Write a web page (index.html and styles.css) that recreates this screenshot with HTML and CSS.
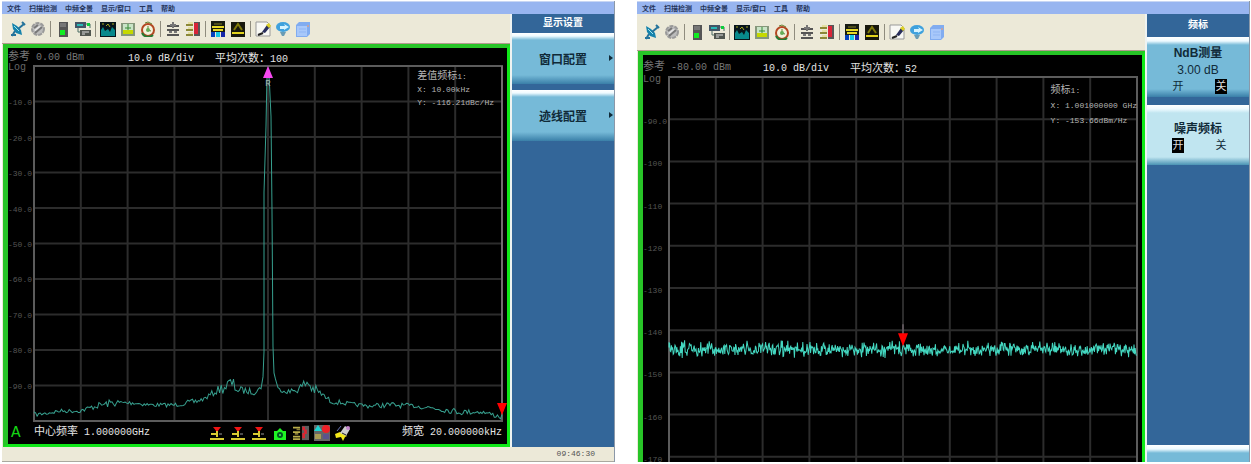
FILE: index.html
```html
<!DOCTYPE html>
<html lang="zh">
<head>
<meta charset="utf-8">
<meta name="viewport" content="width=device-width, initial-scale=1">
<title>频谱分析仪</title>
<link rel="stylesheet" href="styles.css">
</head>
<body>

<!-- 图标 -->
<svg class="defs" aria-hidden="true">
  <symbol id="dish" viewBox="0 0 16 16">
    <path d="M2 2l5 3 4 4 1 5-6-2-3-4z" fill="#1683ac"/>
    <path d="M8 8l6-5M12 1l3 3M5 10l-3 5M1 14h5" stroke="#25739b" stroke-width="2" fill="none"/>
    <path d="M4 5l5 5" stroke="#9de4ef"/>
  </symbol>
  <symbol id="gear" viewBox="0 0 16 16">
    <circle cx="8" cy="8" r="6" fill="#bbb" stroke="#9a9a9a" stroke-width="2" stroke-dasharray="4 1"/>
    <path d="M4 9l5-4 3 1-5 5z" fill="#e4e4e4"/><path d="M5 12l7-6M4 7l4-3" stroke="#777" stroke-width="2"/>
  </symbol>
  <symbol id="power" viewBox="0 0 16 16">
    <rect x="4" y="1" width="9" height="15" fill="#555"/><path d="M5 3h6M5 5h6" stroke="#999"/>
    <rect x="5" y="9" width="5" height="5" fill="#11ed22"/>
  </symbol>
  <symbol id="device" viewBox="0 0 16 16">
    <rect x="0" y="1" width="11" height="6" fill="#456"/><rect x="2" y="3" width="6" height="2" fill="#28b8b6"/>
    <path d="M11 3h4v4M3 7v4h3" stroke="#4a6d65" fill="none"/><rect x="12" y="2" width="3" height="3" fill="#0bce3b"/>
    <rect x="5" y="9" width="11" height="6" fill="#505650"/><path d="M7 11h7M7 13h3" stroke="#ddd"/>
  </symbol>
  <symbol id="spectrum" viewBox="0 0 16 16">
    <rect y="1" width="16" height="15" fill="#07141a"/><path d="M1 15V9l2-3 2 4 3-2 2 3 2-5 3 3v6z" fill="#08898c"/>
    <path d="M2 3h2M6 5l2-2 2 3M12 3h2" stroke="#aaa820" fill="none"/>
  </symbol>
  <symbol id="limit" viewBox="0 0 16 16">
    <rect x="1" y="2" width="14" height="13" fill="#85977b"/><rect x="3" y="3" width="10" height="9" fill="#c9e4c7"/>
    <path d="M3 10h10M3 12h10" stroke="#c5d900" stroke-width="2"/><path d="M8 3v6M5 7h6" stroke="#368b34"/>
  </symbol>
  <symbol id="clock" viewBox="0 0 16 16">
    <circle cx="8" cy="9" r="6" fill="#f2f2dc" stroke="#b44722" stroke-width="2"/>
    <path d="M2 12a7 7 0 0 0 11 2" stroke="#267a32" stroke-width="2" fill="none"/>
    <path d="M5 2l3-1 4 2M8 9V5M8 9l3 1" stroke="#668331" fill="none"/><circle cx="8" cy="9" r="2" fill="#65ad58"/>
  </symbol>
  <symbol id="level" viewBox="0 0 16 16">
    <path d="M2 5h12M2 9h12M2 14h12" stroke="#555" stroke-width="2"/><path d="M8 1v6M5 4h6M4 11h3M9 11h3" stroke="#777" stroke-width="2"/>
  </symbol>
  <symbol id="list" viewBox="0 0 16 16">
    <path d="M1 4h7M1 9h7M1 14h7" stroke="#8b8836" stroke-width="2"/><path d="M3 2h5M3 7h5M3 12h5" stroke="#ddd66c"/>
    <rect x="9" y="1" width="6" height="14" fill="#595757"/><rect x="9" y="2" width="4" height="11" fill="#d92538"/>
  </symbol>
  <symbol id="span" viewBox="0 0 16 16">
    <rect x="1" y="0" width="14" height="11" fill="#171b12"/><path d="M2 6h12M3 9h10" stroke="#e6d927" stroke-width="2"/>
    <path d="M4 3h8" stroke="#817e22"/><path d="M1 11h4v5H1z" fill="#0640bd"/><path d="M6 11h4v5H6z" fill="#15c9e6"/><path d="M11 11h4v5h-4z" fill="#1526aa"/>
  </symbol>
  <symbol id="peak" viewBox="0 0 16 16">
    <rect x="1" y="1" width="14" height="15" fill="#17170c"/><path d="M4 9l4-6 4 6" stroke="#7f790a" stroke-width="2" fill="none"/>
    <path d="M2 12h12" stroke="#e2d31d" stroke-width="2"/>
  </symbol>
  <symbol id="edit" viewBox="0 0 16 16">
    <path d="M1 1h11l3 3v11H1z" fill="#f8f8f4" stroke="#999"/><path d="M3 14l5-2" stroke="#222" stroke-width="2"/>
    <path d="M7 11l5-7 3 2-5 6z" fill="#292e5c"/><path d="M11 4l3-2 2 3-2 2z" fill="#ddd127"/>
  </symbol>
  <symbol id="help" viewBox="0 0 16 16">
    <ellipse cx="8" cy="6" rx="7" ry="5" fill="#3fa1dd"/><path d="M5 5h5l-1-2 5 3-5 3V8H5z" fill="#d6f3ff"/>
    <path d="M5 11h6l-2 4H7z" fill="#6a9cb4"/>
  </symbol>
  <symbol id="book" viewBox="0 0 16 16">
    <path d="M1 4l3-3h11v12l-3 3H1z" fill="#81acf0"/><path d="M2 5h10v10H2z" fill="#a8c8fa"/>
    <path d="M4 8h7M4 11h7" stroke="#8fb5f4"/><circle cx="13" cy="5" r="1" fill="#d7a18c"/>
  </symbol>
  <symbol id="marker" viewBox="0 0 16 16">
    <path d="M4 2h8l-4 5z" fill="#f01414"/><path d="M8 6v6M2 9h5M1 14h14" stroke="#d9cc31" stroke-width="2"/><path d="M10 9h3" stroke="#999"/>
  </symbol>
  <symbol id="home" viewBox="0 0 16 16">
    <path d="M2 6h3l3-3 3 3h3v9H2z" fill="#1ef323"/><circle cx="8" cy="10" r="3" fill="#052"/><circle cx="8" cy="10" r="1" fill="#4f5"/>
  </symbol>
  <symbol id="table" viewBox="0 0 18 16">
    <path d="M0 2h8M0 7h8M0 12h8M0 15h8" stroke="#b9ad49" stroke-width="2"/><path d="M4 4h4M2 9h4" stroke="#877b37" stroke-width="2"/>
    <rect x="10" width="8" height="16" fill="#5d5d5d"/><path d="M12 1v4M14 4v5M12 8v6" stroke="#d92632" stroke-width="3"/>
  </symbol>
  <symbol id="blocks" viewBox="0 0 16 16">
    <rect width="16" height="16" fill="#666"/><path d="M0 6l4-6 4 6z" fill="#1dd6d4"/><circle cx="12" cy="4" r="4" fill="#ed2128"/>
    <rect x="1" y="9" width="6" height="5" fill="#a99c55"/><rect x="9" y="9" width="6" height="5" fill="#5b548d"/>
  </symbol>
  <symbol id="brush" viewBox="0 0 16 16">
    <path d="M0 9l5-2 7 4-2 1-2 4-2-4-5 1z" fill="#f2e71a"/><path d="M5 8l5-7 5 3-4 7z" fill="#ccc"/>
    <path d="M2 6l4-5" stroke="#6873b6"/><circle cx="13" cy="3" r="2" fill="#c487cd"/><path d="M7 8l4 2" stroke="#222"/>
  </symbol>
</svg>

<main class="bench">

  <section class="analyzer first">
    <nav class="menu">
      <button>文件</button><button>扫描检测</button><button>中频全景</button><button>显示/窗口</button><button>工具</button><button>帮助</button>
    </nav>
    <div class="work">
      <div class="tools"></div>
      <div class="screen">
        <div class="info">
          <span class="ref"><b>参考</b> 0.00 dBm</span>
          <span class="scale">10.0 dB/div</span>
          <span><b>平均次数：</b>100</span>
        </div>
        <div class="graph">
          <div class="axis">
            <span class="log">Log</span><span>-10.0</span><span>-20.0</span><span>-30.0</span><span>-40.0</span><span>-50.0</span><span>-60.0</span><span>-70.0</span><span>-80.0</span><span>-90.0</span>
          </div>
          <div class="plot">
            <svg id="carrier" viewBox="0 0 468 354" preserveAspectRatio="none">
              <g class="grid"></g>
              <path class="trace"/>
              <path d="M234 0l5 12h-10z" fill="#f548ef"/>
              <text class="tag" x="234" y="20">R</text>
              <path class="stem" d="M468 0v340"/>
              <path d="M463 336h10l-5 12z" fill="#f00"/>
            </svg>
            <p class="readout"><b>差值频标</b>1:<br>X: 10.00kHz<br>Y: -116.21dBc/Hz</p>
          </div>
        </div>
        <div class="foot">
          <span class="channel">A</span>
          <span><b>中心频率</b> 1.000000GHz</span>
          <div class="marks">
            <button aria-label="频标1"><svg><use href="#marker"/></svg></button>
            <button aria-label="频标2"><svg><use href="#marker"/></svg></button>
            <button aria-label="频标3"><svg><use href="#marker"/></svg></button>
            <button aria-label="复位"><svg><use href="#home"/></svg></button>
            <button aria-label="列表"><svg><use href="#table"/></svg></button>
            <button aria-label="窗口"><svg><use href="#blocks"/></svg></button>
            <button aria-label="清除"><svg><use href="#brush"/></svg></button>
          </div>
          <span class="width"><b>频宽</b> 20.000000kHz</span>
        </div>
      </div>
    </div>
    <aside class="side">
      <h2>显示设置</h2>
      <button class="key more">窗口配置</button>
      <button class="key more">迹线配置</button>
    </aside>
    <footer class="status"><time>09:46:30</time></footer>
  </section>

  <section class="analyzer second">
    <nav class="menu">
      <button>文件</button><button>扫描检测</button><button>中频全景</button><button>显示/窗口</button><button>工具</button><button>帮助</button>
    </nav>
    <div class="work">
      <div class="tools"></div>
      <div class="screen">
        <div class="info">
          <span class="ref"><b>参考</b> -80.00 dBm</span>
          <span class="scale">10.0 dB/div</span>
          <span><b>平均次数：</b>52</span>
        </div>
        <div class="graph">
          <div class="axis">
            <span class="log">Log</span><span>-90.0</span><span>-100</span><span>-110</span><span>-120</span><span>-130</span><span>-140</span><span>-150</span><span>-160</span><span>-170</span>
          </div>
          <div class="plot">
            <svg id="noise" viewBox="0 0 468 420" preserveAspectRatio="none">
              <g class="grid"></g>
              <path class="trace"/>
              <path class="stem" d="M234 246v10"/>
              <path d="M229 255h10l-5 13z" fill="#f00"/>
            </svg>
            <p class="readout"><b>频标</b>1:<br>X: 1.001000000 GHz<br>Y: -153.66dBm/Hz</p>
          </div>
        </div>
      </div>
    </div>
    <aside class="side">
      <h2>频标</h2>
      <button class="key">NdB测量<span class="value">3.00 dB</span><span class="switch"><i>开</i><i class="on">关</i></span></button>
      <button class="key active">噪声频标<span class="switch"><i class="on">开</i><i>关</i></span></button>
      <button class="key last" aria-label="返回"></button>
    </aside>
  </section>

</main>

<script src="script.js"></script>
</body>
</html>
```
FILE: styles.css
```css
* {
  box-sizing: border-box;
}
body {
  margin: 0;
  background: #fff;
  font-family: "Liberation Sans", "Noto Sans CJK SC", sans-serif;
}
button {
  margin: 0;
  padding: 0;
  border: 0;
  background: none;
  font: inherit;
  color: inherit;
}
.defs {
  position: absolute;
  width: 0;
  height: 0;
}
.bench {
  display: grid;
  grid-template-columns: 1fr 1fr;
  gap: 22px;
  height: 100vh;
  min-height: 360px;
  padding: 1px 1px 2px 2px;
}
.analyzer {
  display: grid;
  grid-template-columns: 1fr 104px;
  grid-template-rows: 13px minmax(0, 1fr) auto;
  min-height: 0;
  overflow: hidden;
  background: #ece9d8;
  border-right: 1px solid #8b98a8;
}

/* 菜单 */
.menu {
  grid-column: 1 / 3;
  display: flex;
  gap: 8px;
  padding-left: 5px;
  background: #98b5f0;
  border-top: 1px solid #c8d6f4;
  font-size: 7px;
  font-weight: bold;
  line-height: 11px;
  color: #26355c;
}

/* 工具栏 */
.work {
  display: flex;
  flex-direction: column;
  min-width: 0;
  min-height: 0;
}
.tools {
  flex: none;
  display: flex;
  align-items: center;
  gap: 4px;
  height: 30px;
  padding-left: 8px;
  border-bottom: 1px solid #b39a90;
}
.tools svg, .marks svg {
  display: block;
  width: 16px;
  height: 16px;
}
.tools hr {
  width: 1px;
  height: 16px;
  margin: 0;
  border: 0;
  background: #8f8c7e;
}
.second .tools {
  height: 37px;
  padding-left: 7px;
}

/* 屏幕 */
.screen {
  flex: 1;
  display: flex;
  flex-direction: column;
  min-height: 0;
  margin-left: 1px;
  padding-right: 5px;
  overflow: hidden;
  background: #000;
  border: 4px solid #27c427;
  border-width: 4px 3px 3px 5px;
  border-right-color: #10e818;
  border-bottom-color: #10e818;
  font: 10px/14px "Liberation Mono", "Noto Sans CJK SC", monospace;
  color: #e4e4e4;
  white-space: nowrap;
}
.screen b {
  font-size: 11px;
  font-weight: normal;
}
.info {
  flex: none;
  display: flex;
  height: 14px;
  padding-top: 4px;
}
.info span {
  line-height: 14px;
}
.info .ref {
  width: 120px;
  margin-top: -2px;
  color: #777;
}
.info .scale {
  width: 87px;
}
.graph {
  flex: 1;
  display: flex;
  min-height: 0;
}
.axis {
  flex: none;
  display: flex;
  flex-direction: column;
  width: 26px;
  margin-bottom: 5px;
  font-size: 8px;
  line-height: 12px;
  color: #555;
}
.axis span {
  flex: 1;
  min-height: 0;
}
.axis .log {
  font-size: 10px;
  color: #666;
}
.plot {
  flex: 1;
  position: relative;
  margin-top: 4px;
}
.plot svg {
  display: block;
  position: absolute;
  width: 100%;
  height: 100%;
  overflow: visible;
}
.grid path {
  fill: none;
  stroke: #2c2c2c;
  stroke-width: 2;
}
.grid .frame {
  stroke: #5c5c5c;
}
.trace {
  fill: none;
  stroke: #37a08f;
  stroke-width: 1;
}
#noise .trace {
  stroke: #44d8c1;
}
.tag {
  fill: #a5b5b2;
  font-size: 9px;
  text-anchor: middle;
}
.stem {
  stroke: #897b83;
}
.readout {
  position: absolute;
  top: 4px;
  right: 8px;
  margin: 0;
  font-size: 8px;
  line-height: 13px;
  color: #b4b4b4;
}
.readout b {
  font-size: 10px;
  line-height: 1;
}
.foot {
  flex: none;
  display: grid;
  grid-template-columns: 26px 175px auto 1fr;
  align-items: center;
  height: 23px;
}
.channel {
  padding-left: 3px;
  font-size: 16px;
  color: #14d514;
}
.marks {
  display: flex;
  gap: 5px;
}
.width {
  text-align: right;
}
.second .screen {
  border-bottom: 0;
}
.second .info {
  height: 17px;
  padding-top: 7px;
}
.second .graph {
  flex: none;
  height: 427px;
}
.second .plot {
  margin-top: 5px;
}
.second .axis {
  margin-bottom: 5px;
  line-height: 16px;
}
.second .readout {
  top: 6px;
  right: 0;
  line-height: 15px;
}

/* 软键 */
.side {
  display: flex;
  flex-direction: column;
  background: #336699;
  border-left: 2px solid #eef3f2;
  font-size: 12px;
  color: #102a38;
}
.side h2 {
  flex: none;
  height: 19px;
  margin: 0;
  font-size: 10px;
  line-height: 17px;
  text-align: center;
  color: #fff;
}
.key {
  flex: none;
  position: relative;
  height: 51px;
  margin-bottom: 6px;
  background: linear-gradient(#fff 0, #eefaff 3px, #76bad8 7px, #76bad8 42px, #3a7fa8 51px);
  font-weight: bold;
}
.more::after {
  content: "";
  position: absolute;
  right: 1px;
  top: 22px;
  border: 3px solid transparent;
  border-left: 4px solid #102a38;
  border-right: 0;
}
.second .side h2 {
  height: 23px;
  line-height: 21px;
}
.second .key {
  height: 60px;
  margin-bottom: 8px;
  padding-top: 4px;
  background: linear-gradient(#fff 0, #eefaff 4px, #76bad8 8px, #76bad8 52px, #3a7fa8 60px);
  line-height: 17px;
}
.second .active {
  background: linear-gradient(#fff 0, #eefaff 4px, #c0e5f0 8px, #c0e5f0 52px, #4a93b4 60px);
}
.second .last {
  height: 17px;
  margin: auto 0 0;
  background: linear-gradient(#fff 0, #eefaff 4px, #76bad8 8px);
}
.value {
  display: block;
  font-weight: normal;
}
.switch {
  display: flex;
  justify-content: space-between;
  padding: 0 22px 0 25px;
  font-size: 11px;
  font-weight: normal;
}
.switch i {
  width: 12px;
  font-style: normal;
  line-height: 15px;
}
.switch .on {
  background: #000;
  color: #ddd;
}

/* 状态栏 */
.status {
  grid-column: 1 / 3;
  height: 15px;
  padding-right: 19px;
  border-bottom: 1px solid #aaa99f;
  font: 8px/14px "Liberation Mono", monospace;
  color: #555;
  text-align: right;
}
```
FILE: script.js
```js
// 工具栏，'|' 为分隔线
const tools = ['dish', 'gear', '|', 'power', 'device', '|', 'spectrum', 'limit', 'clock', '|', 'level', 'list', '|', 'span', 'peak', '|', 'edit', 'help', 'book'];

document.querySelectorAll('.tools').forEach(bar => {
    bar.innerHTML = tools.map(t => t === '|' ? '<hr>' :
        '<button aria-label="' + t + '"><svg><use href="#' + t + '"/></svg></button>').join('');
});

// 伪随机数，每次绘制结果相同
let seed = 7;
function rnd() {
    seed = (seed * 16807) % 2147483647;
    return seed / 2147483647 * 2 - 1;
}

// 10x10 网格
function drawGrid(svg, w, h) {
    let d = '';
    for (let i = 1; i < 10; i++) {
        d += 'M' + w / 10 * i + ' 0V' + h + 'M0 ' + h / 10 * i + 'H' + w;
    }
    svg.querySelector('.grid').innerHTML = '<path d="' + d + '"/><path class="frame" d="M0 0H' + w + 'V' + h + 'H0z"/>';
}

// 载波频谱: [x, y, 抖动]
const curve = [
    [0, 348, 2], [14, 346, 2], [26, 344, 2], [46, 344, 2], [62, 339, 3], [78, 336, 4], [100, 336, 2],
    [116, 338, 2], [140, 338, 2], [160, 335, 3], [170, 332, 2], [184, 323, 4], [192, 319, 8],
    [198, 317, 8], [204, 323, 4], [220, 325, 3], [227, 321, 2], [229, 310, 0], [230, 285, 0],
    [230, 126, 0], [232, 60, 0], [233, 8, 0], [235, 8, 0], [237, 50, 0], [238, 145, 0],
    [239, 280, 0], [240, 306, 0], [244, 322, 2], [256, 325, 3], [268, 320, 5], [273, 315, 8],
    [279, 322, 7], [286, 326, 3], [296, 334, 3], [316, 337, 2], [334, 339, 2], [356, 338, 3],
    [380, 339, 2], [400, 341, 3], [426, 345, 3], [448, 345, 2], [468, 350, 3]
];
const carrier = document.querySelector('#carrier');
drawGrid(carrier, 468, 354);
let line = 'M0 345';
for (let i = 1; i < curve.length; i++) {
    const [x0, y0, n0] = curve[i - 1];
    const [x1, y1, n1] = curve[i];
    const steps = Math.max(1, Math.round((x1 - x0) / 1.5));
    for (let s = 1; s <= steps; s++) {
        const k = s / steps;
        line += 'L' + (x0 + (x1 - x0) * k).toFixed(1) + ' ' + (y0 + (y1 - y0) * k + rnd() * (n0 + (n1 - n0) * k)).toFixed(1);
    }
}
carrier.querySelector('.trace').setAttribute('d', line);

// 噪声
const noise = document.querySelector('#noise');
drawGrid(noise, 468, 420);
line = 'M0 264';
for (let x = 0; x <= 468; x += 0.6) {
    line += 'L' + x.toFixed(1) + ' ' + (271 + (rnd() + rnd() + rnd()) * 3.4).toFixed(1);
}
noise.querySelector('.trace').setAttribute('d', line);
```
